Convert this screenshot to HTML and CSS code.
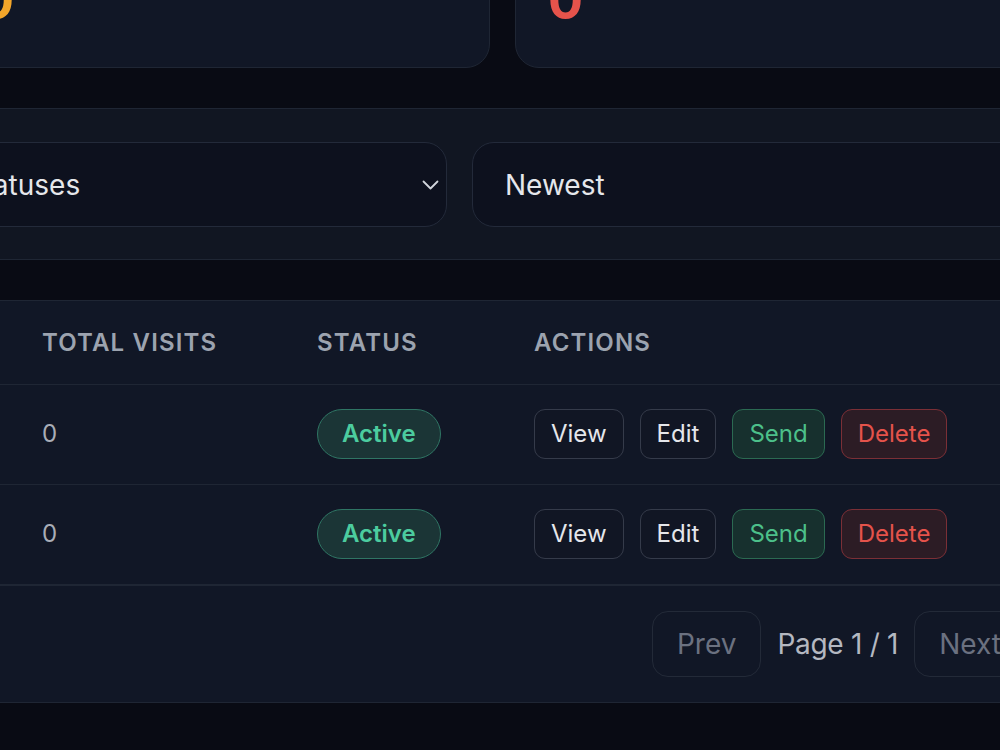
FILE: index.html
```html
<!DOCTYPE html>
<html lang="en">
<head>
<meta charset="utf-8">
<title>Links</title>
<link rel="stylesheet" href="styles.css">
</head>
<body>
<div class="page">
  <section class="stats">
    <div class="card">
      <div class="card-label">Pending</div>
      <div class="card-value value-amber">0</div>
    </div>
    <div class="card">
      <div class="card-label">Expired</div>
      <div class="card-value value-red">0</div>
    </div>
  </section>

  <section class="panel filters">
    <div class="select select-status">
      <span class="select-text">All statuses</span>
      <svg class="chevron" width="17" height="10" viewBox="0 0 17 10" fill="none"><path d="M1.5 1.5 L8.5 8.5 L15.5 1.5" stroke="#d1d5db" stroke-width="1.8" stroke-linecap="round" stroke-linejoin="round"/></svg>
    </div>
    <div class="select select-sort">
      <span class="select-text">Newest</span>
    </div>
  </section>

  <section class="panel table-panel">
    <table class="table">
      <colgroup>
        <col class="col-id">
        <col class="col-visits">
        <col class="col-status">
        <col class="col-actions">
      </colgroup>
      <thead>
        <tr>
          <th>ID</th>
          <th>Total visits</th>
          <th>Status</th>
          <th>Actions</th>
        </tr>
      </thead>
      <tbody>
        <tr>
          <td>1</td>
          <td class="num">0</td>
          <td><span class="badge">Active</span></td>
          <td>
            <div class="actions">
              <button class="btn">View</button>
              <button class="btn">Edit</button>
              <button class="btn btn-send">Send</button>
              <button class="btn btn-delete">Delete</button>
            </div>
          </td>
        </tr>
        <tr>
          <td>2</td>
          <td class="num">0</td>
          <td><span class="badge">Active</span></td>
          <td>
            <div class="actions">
              <button class="btn">View</button>
              <button class="btn">Edit</button>
              <button class="btn btn-send">Send</button>
              <button class="btn btn-delete">Delete</button>
            </div>
          </td>
        </tr>
      </tbody>
    </table>
    <div class="pager">
      <button class="pager-btn" disabled>Prev</button>
      <span class="pager-text">Page 1 / 1</span>
      <button class="pager-btn" disabled>Next</button>
    </div>
  </section>
</div>
</body>
</html>
```

FILE: styles.css
```css
* { box-sizing: border-box; }

html, body {
  margin: 0;
  padding: 0;
  background: #090b14;
  overflow: hidden;
}

body {
  font-family: Inter, "Noto Sans", "Liberation Sans", sans-serif;
  color: #e5e7eb;
}

.page {
  margin-left: -133px;
  width: 1200px;
  display: flex;
  flex-direction: column;
  gap: 40px;
}

/* stat cards */
.stats {
  margin-top: -84px;
  padding-left: 79px;
  display: grid;
  grid-template-columns: 544px 544px;
  gap: 25px;
}

.card {
  background: #111726;
  border: 1px solid #1f2634;
  border-radius: 24px;
  padding: 28px 32px 40px;
}

.card-label {
  font-size: 20px;
  line-height: 20px;
  margin-bottom: 10px;
  color: #9ca3af;
}

.card-value {
  font-size: 52px;
  line-height: 52px;
  font-weight: 700;
}

.value-amber { color: #f4a62a; }
.value-red { color: #e5534b; }

/* panels */
.panel {
  background: #111622;
  border: 1px solid #1f2634;
}

.filters {
  padding: 33px 32px 32px;
  display: grid;
  grid-template-columns: 547px 1fr;
  gap: 25px;
}

.select {
  height: 85px;
  background: #0d111e;
  border: 1px solid #232a3a;
  border-radius: 22px;
  padding: 0 7px 0 32px;
  display: flex;
  align-items: center;
  justify-content: space-between;
  font-size: 28px;
  color: #e5e7eb;
}

.select-status { padding-left: 27px; }

.chevron { display: block; }

/* table */
.table-panel {
  background: #111726;
}

.table {
  width: 100%;
  border-collapse: collapse;
  table-layout: fixed;
}

.col-id { width: 150px; }
.col-visits { width: 275px; }
.col-status { width: 217px; }

.table th {
  text-align: left;
  font-size: 24px;
  line-height: 32px;
  font-weight: 600;
  letter-spacing: 0.048em;
  text-transform: uppercase;
  color: #9ca3af;
  padding: 26px 24px 25px;
  border-bottom: 1px solid #1f2634;
}

.table td {
  font-size: 24px;
  line-height: 32px;
  padding: 24px 24px 25px;
  border-bottom: 1px solid #1f2634;
  vertical-align: middle;
  color: #9ca3af;
}

.table td.num { color: #a8adb7; }

.badge {
  display: inline-block;
  padding: 8px 24px;
  border-radius: 999px;
  background: #1b3536;
  border: 1px solid #2f7564;
  color: #4ccc9f;
  font-weight: 600;
  font-size: 24px;
  line-height: 32px;
}

.actions {
  display: flex;
  gap: 16px;
}

.btn {
  font-family: inherit;
  font-size: 24px;
  line-height: 32px;
  padding: 8px 16px;
  border-radius: 11px;
  background: #111624;
  border: 1px solid #353b4a;
  color: #e5e7eb;
}

.btn-send {
  background: #17302e;
  border-color: #2b6a52;
  color: #4cc08a;
}

.btn-delete {
  background: #2c1c25;
  border-color: #7b2f36;
  color: #e5534b;
}

/* pager */
.pager {
  border-top: 1px solid #1f2634;
  padding: 25px 40px 25px 24px;
  display: flex;
  justify-content: flex-end;
  align-items: center;
  gap: 16px;
}

.pager-btn {
  font-family: inherit;
  font-size: 28px;
  line-height: 40px;
  padding: 12px 24px;
  border-radius: 16px;
  background: transparent;
  border: 1px solid #232a38;
  color: #6b7180;
}

.pager-text {
  font-size: 28px;
  line-height: 40px;
  letter-spacing: -0.01em;
  color: #b4b8c1;
}
```
